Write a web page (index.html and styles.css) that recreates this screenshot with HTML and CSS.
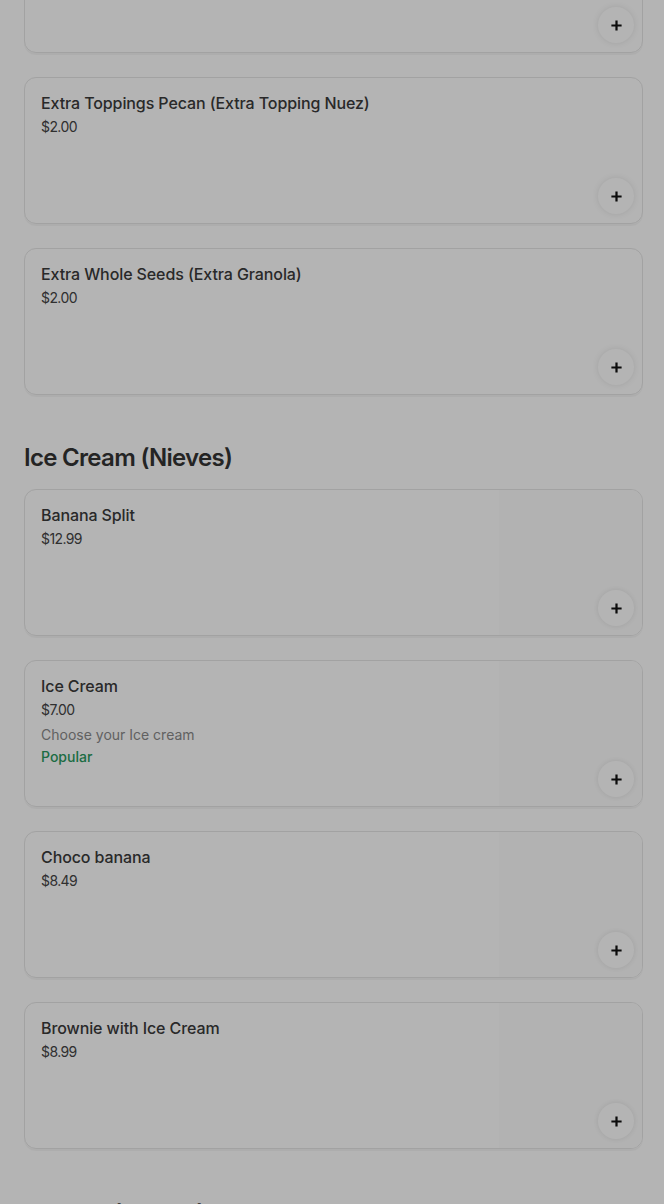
FILE: index.html
```html
<html>
<head>
  <title>Menu</title>
  <link rel="stylesheet" href="styles.css">
</head>
<body>
<div id="menu">

  <div class="section">
    <div class="items">
      <div class="item">
        <div class="info">
          <div class="name">Extra Toppings Fresa (Extra Topping Fresa)</div>
          <div class="price">$2.00</div>
        </div>
        <button class="add"><svg viewBox="0 0 14 14"><path d="M7 1.5v11M1.5 7h11"/></svg></button>
      </div>
      <div class="item">
        <div class="info">
          <div class="name">Extra Toppings Pecan (Extra Topping Nuez)</div>
          <div class="price">$2.00</div>
        </div>
        <button class="add"><svg viewBox="0 0 14 14"><path d="M7 1.5v11M1.5 7h11"/></svg></button>
      </div>
      <div class="item">
        <div class="info">
          <div class="name">Extra Whole Seeds (Extra Granola)</div>
          <div class="price">$2.00</div>
        </div>
        <button class="add"><svg viewBox="0 0 14 14"><path d="M7 1.5v11M1.5 7h11"/></svg></button>
      </div>
    </div>
  </div>

  <div class="section">
    <h2>Ice Cream (Nieves)</h2>
    <div class="items">
      <div class="item">
        <div class="info">
          <div class="name">Banana Split</div>
          <div class="price">$12.99</div>
        </div>
        <div class="pic"></div>
        <button class="add"><svg viewBox="0 0 14 14"><path d="M7 1.5v11M1.5 7h11"/></svg></button>
      </div>
      <div class="item">
        <div class="info">
          <div class="name">Ice Cream</div>
          <div class="price">$7.00</div>
          <div class="desc">Choose your Ice cream</div>
          <div class="tag">Popular</div>
        </div>
        <div class="pic"></div>
        <button class="add"><svg viewBox="0 0 14 14"><path d="M7 1.5v11M1.5 7h11"/></svg></button>
      </div>
      <div class="item">
        <div class="info">
          <div class="name">Choco banana</div>
          <div class="price">$8.49</div>
        </div>
        <div class="pic"></div>
        <button class="add"><svg viewBox="0 0 14 14"><path d="M7 1.5v11M1.5 7h11"/></svg></button>
      </div>
      <div class="item">
        <div class="info">
          <div class="name">Brownie with Ice Cream</div>
          <div class="price">$8.99</div>
        </div>
        <div class="pic"></div>
        <button class="add"><svg viewBox="0 0 14 14"><path d="M7 1.5v11M1.5 7h11"/></svg></button>
      </div>
    </div>
  </div>

  <div class="section last">
    <h2>Waffles (Wafles)</h2>
  </div>

</div>
<div class="backdrop"></div>
</body>
</html>
```

FILE: styles.css
```css
body {
  margin: 0;
  background: #fff;
  font-family: Inter, "Liberation Sans", sans-serif;
  color: #3a3a3a;
  overflow: hidden;
}
#menu {
  padding: 0 21px 0 24px;
  margin-top: -94px;
}
.section h2 {
  margin: 47px 0 15px 0;
  font-size: 24px;
  line-height: 32px;
  font-weight: 600;
  letter-spacing: -0.7px;
  color: #333;
}
.section.last h2 {
  margin-top: 49px;
}
.items {
  display: flex;
  flex-direction: column;
  gap: 24px;
}
.item {
  position: relative;
  display: flex;
  height: 147px;
  box-sizing: border-box;
  border: 1px solid #e6e6e6;
  border-radius: 12px;
  box-shadow: 0 2px 0 rgba(0, 0, 0, 0.035);
  overflow: hidden;
}
.info {
  flex: 1;
  padding: 15px 16px;
}
.pic {
  width: 143px;
  background: #fdfdfd;
}
.name {
  font-size: 16px;
  line-height: 20px;
  font-weight: 500;
  letter-spacing: -0.1px;
}
.price {
  margin-top: 4px;
  font-size: 14px;
  line-height: 20px;
  letter-spacing: -0.6px;
  color: #444;
}
.desc {
  margin-top: 5px;
  font-size: 14px;
  line-height: 20px;
  color: #8a8a8a;
}
.tag {
  margin-top: 2px;
  font-size: 14px;
  line-height: 20px;
  font-weight: 500;
  color: #2a9a60;
}
.add {
  position: absolute;
  right: 8px;
  bottom: 9px;
  width: 36px;
  height: 36px;
  border: none;
  border-radius: 50%;
  background: #fff;
  box-shadow: 0 0 6px rgba(0, 0, 0, 0.1);
  padding: 0;
  display: flex;
  align-items: center;
  justify-content: center;
}
.add svg {
  width: 13px;
  height: 13px;
  stroke: #111;
  stroke-width: 2.4;
  fill: none;
}
.backdrop {
  position: fixed;
  top: 0;
  left: 0;
  right: 0;
  bottom: 0;
  background: rgba(0, 0, 0, 0.294);
}
```
